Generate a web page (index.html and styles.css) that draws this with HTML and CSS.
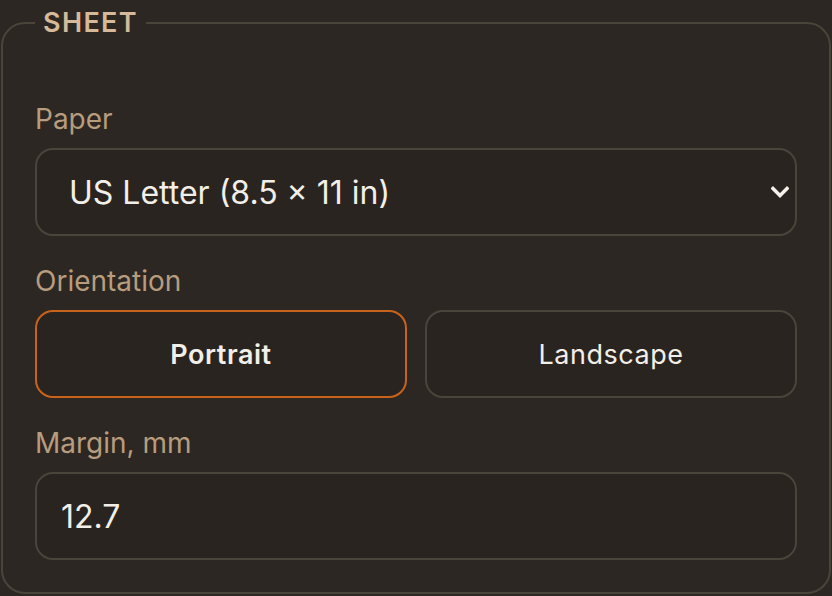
FILE: index.html
```html
<!DOCTYPE html>
<html lang="en">
<head>
    <meta charset="UTF-8">
    <meta name="viewport" content="width=device-width, initial-scale=1.0">
    <title>Sheet settings</title>
    <link rel="stylesheet" href="styles.css">
</head>
<body>
    <fieldset class="sheet">
        <legend class="sheet-title">SHEET</legend>

        <div class="field">
            <label class="field-label" for="paper">Paper</label>
            <div class="select-wrap">
                <select id="paper" class="control select">
                    <option>US Letter (8.5 × 11 in)</option>
                    <option>A4 (210 × 297 mm)</option>
                    <option>A5 (148 × 210 mm)</option>
                </select>
                <svg class="chevron" width="18" height="12" viewBox="0 0 18 12">
                    <path d="M2 2.5 L9 9.5 L16 2.5" fill="none" stroke="#f4f0ea" stroke-width="3.4" stroke-linecap="square"/>
                </svg>
            </div>
        </div>

        <div class="field">
            <span class="field-label">Orientation</span>
            <div class="toggle">
                <button class="toggle-btn active">Portrait</button>
                <button class="toggle-btn">Landscape</button>
            </div>
        </div>

        <div class="field">
            <label class="field-label" for="margin">Margin, mm</label>
            <input id="margin" class="control input" type="text" value="12.7">
        </div>
    </fieldset>
</body>
</html>
```

FILE: styles.css
```css
body, html {
    margin: 0;
    padding: 0;
    background-color: #2c2722;
    font-family: Inter, "Noto Sans", sans-serif;
    color: #f2eee8;
}
body {
    padding: 0 1px;
}
.sheet {
    margin: 8px 0 0;
    padding: 64px 32px 32px;
    border: 2px solid #4a443b;
    border-radius: 24px;
    min-width: 0;
}
.sheet-title {
    padding: 0 8px;
    margin-left: 0;
    font-size: 27px;
    font-weight: 600;
    letter-spacing: 0.05em;
    line-height: 30px;
    color: #d5b999;
}
.field {
    display: flex;
    flex-direction: column;
    margin-top: 28px;
}
.field:first-of-type {
    margin-top: 0;
}
.field-label {
    font-size: 28px;
    line-height: 34px;
    color: #b89c7e;
    margin-bottom: 12px;
}
.control {
    box-sizing: border-box;
    width: 100%;
    height: 88px;
    background-color: #29241f;
    border: 2px solid #4a443b;
    border-radius: 18px;
    color: #f2eee8;
    font-family: inherit;
    font-size: 32px;
    outline: none;
}
.select-wrap {
    position: relative;
}
.select {
    appearance: none;
    -webkit-appearance: none;
    padding: 0 60px 0 32px;
}
.chevron {
    position: absolute;
    right: 8px;
    top: 38px;
    pointer-events: none;
}
.input {
    padding: 0 24px;
}
.toggle {
    display: flex;
    gap: 18px;
}
.toggle-btn {
    flex: 1;
    height: 88px;
    background-color: #29241f;
    border: 2px solid #4a443b;
    border-radius: 18px;
    color: #f2eee8;
    font-family: inherit;
    font-size: 27px;
    font-weight: 400;
    letter-spacing: 0.02em;
}
.toggle-btn.active {
    border-color: #c9631c;
    font-weight: 600;
}
```
